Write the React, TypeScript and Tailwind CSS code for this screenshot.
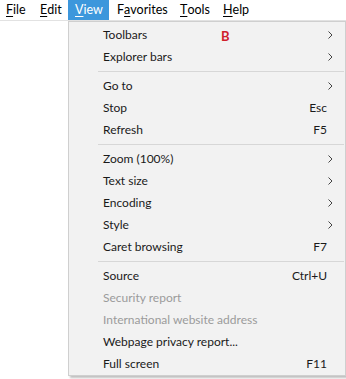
import React from 'react';

type Item =
  | { kind: 'sep' }
  | { kind: 'item'; label: string; shortcut?: string; sub?: boolean; disabled?: boolean; badge?: boolean };

const items: Item[] = [
  { kind: 'item', label: 'Toolbars', sub: true, badge: true },
  { kind: 'item', label: 'Explorer bars', sub: true },
  { kind: 'sep' },
  { kind: 'item', label: 'Go to', sub: true },
  { kind: 'item', label: 'Stop', shortcut: 'Esc' },
  { kind: 'item', label: 'Refresh', shortcut: 'F5' },
  { kind: 'sep' },
  { kind: 'item', label: 'Zoom (100%)', sub: true },
  { kind: 'item', label: 'Text size', sub: true },
  { kind: 'item', label: 'Encoding', sub: true },
  { kind: 'item', label: 'Style', sub: true },
  { kind: 'item', label: 'Caret browsing', shortcut: 'F7' },
  { kind: 'sep' },
  { kind: 'item', label: 'Source', shortcut: 'Ctrl+U' },
  { kind: 'item', label: 'Security report', disabled: true },
  { kind: 'item', label: 'International website address', disabled: true },
  { kind: 'item', label: 'Webpage privacy report...' },
  { kind: 'item', label: 'Full screen', shortcut: 'F11' },
];

function Chevron() {
  return (
    <svg width="5" height="8" viewBox="0 0 5 8" fill="none" stroke="#444" strokeWidth="1">
      <path d="M0.5 0.5 L4 4 L0.5 7.5" />
    </svg>
  );
}

function TopItem({ first, rest, w, pl, active }: { first: string; rest: string; w: string; pl: string; active?: boolean }) {
  return (
    <div className={`h-full flex items-center ${w} ${pl} ${active ? 'bg-[#3c97dc] text-white' : 'text-black'}`}>
      <span className="underline underline-offset-2">{first}</span>
      <span>{rest}</span>
    </div>
  );
}

export default function App() {
  return (
    <div
      className="relative w-[346px] h-[379px] bg-white overflow-hidden text-[12px]"
      style={{ fontFamily: 'Lato, "Noto Sans", sans-serif' }}
    >
      {/* Menu bar */}
      <div className="flex h-[21px] border-b border-[#e2e2e2] text-[12.5px]">
        <TopItem first="F" rest="ile" w="w-[34px]" pl="pl-[6px]" />
        <TopItem first="E" rest="dit" w="w-[34px]" pl="pl-[6px]" />
        <TopItem first="V" rest="iew" w="w-[41px]" pl="pl-[7px]" active />
        <div className="h-full flex items-center w-[64px] pl-[8px]">
          <span>F</span>
          <span className="underline underline-offset-2">a</span>
          <span>vorites</span>
        </div>
        <TopItem first="T" rest="ools" w="w-[43px]" pl="pl-[7px]" />
        <TopItem first="H" rest="elp" w="w-[50px]" pl="pl-[7px]" />
      </div>

      {/* Dropdown */}
      <div className="absolute left-[68px] top-[21px] w-[278px] h-[355px] bg-[#f2f2f2] border border-[#cfcfcf] shadow-[2px_2px_2px_rgba(0,0,0,0.25)] pt-[2px] text-[#1a1a1a]">
        {items.map((it, i) =>
          it.kind === 'sep' ? (
            <div key={i} className="h-[7px] flex items-center pl-[29px] pr-[1px]">
              <div className="h-px w-full bg-[#d7d7d7]" />
            </div>
          ) : (
            <div key={i} className="relative h-[22px] flex items-center pl-[34px] pr-[18px]">
              <span className={`flex-1 ${it.disabled ? 'text-[#9b9b9b]' : ''}`}>{it.label}</span>
              {it.shortcut && <span>{it.shortcut}</span>}
              {it.sub && (
                <span className="absolute right-[12px] top-[7px]">
                  <Chevron />
                </span>
              )}
              {it.badge && (
                <span className="absolute left-[152px] top-[3px] text-[13px] font-bold text-[#d0202a]">B</span>
              )}
            </div>
          )
        )}
      </div>
    </div>
  );
}
